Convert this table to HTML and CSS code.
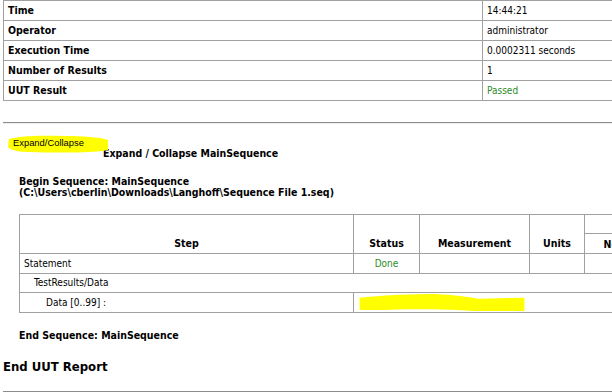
FILE: index.html
```html
<!DOCTYPE html>
<html lang="en">
<head>
    <meta charset="UTF-8">
    <title>UUT Report</title>
    <link rel="stylesheet" href="styles.css">
</head>
<body>
    <table class="summary">
        <tr><th>Time</th><td>14:44:21</td></tr>
        <tr><th>Operator</th><td>administrator</td></tr>
        <tr><th>Execution Time</th><td>0.0002311 seconds</td></tr>
        <tr><th>Number of Results</th><td>1</td></tr>
        <tr><th>UUT Result</th><td class="pass">Passed</td></tr>
    </table>

    <hr class="rule">

    <div class="toggle-row">
        <span class="toggle">
            <svg class="marker" viewBox="0 0 100 18" preserveAspectRatio="none">
                <path d="M1 4 C12 1 30 0 55 1 C75 1 92 2 100 5 L100 15 C85 18 50 18 22 17 C12 17 4 16 0 12 Z" fill="#ffff00"/>
            </svg>
            <span class="toggle-label">Expand/Collapse</span>
        </span>
        <span class="toggle-title">Expand / Collapse MainSequence</span>
    </div>

    <div class="sequence">
        <p class="seq-begin">Begin Sequence: MainSequence<br>(C:\Users\cberlin\Downloads\Langhoff\Sequence File 1.seq)</p>

        <table class="steps">
            <colgroup>
                <col class="c-step"><col class="c-status"><col class="c-meas"><col class="c-units"><col class="c-limit"><col class="c-limit">
            </colgroup>
            <tr class="head-top">
                <th rowspan="2">Step</th>
                <th rowspan="2">Status</th>
                <th rowspan="2">Measurement</th>
                <th rowspan="2">Units</th>
                <th colspan="2">Numeric Limits</th>
            </tr>
            <tr class="head-sub">
                <th>Nominal</th>
                <th>Comparison</th>
            </tr>
            <tr>
                <td>Statement</td>
                <td class="done">Done</td>
                <td></td>
                <td></td>
                <td></td>
                <td></td>
            </tr>
            <tr>
                <td colspan="6" class="lvl-1">TestResults/Data</td>
            </tr>
            <tr>
                <td class="lvl-2">Data [0..99] :</td>
                <td colspan="5" class="value">
                    <svg class="marker-wide" viewBox="0 0 174 19">
                        <path d="M0 4 C30 1 55 0 80 0 C100 1 115 3 125 5 L174 4 L174 18 L120 18 C100 16 70 16 50 16 C25 17 8 17 0 17 Z" fill="#ffff00"/>
                    </svg>
                </td>
            </tr>
        </table>

        <p class="seq-end">End Sequence: MainSequence</p>
    </div>

    <h3 class="report-end">End UUT Report</h3>

    <hr class="rule">
</body>
</html>
```

FILE: styles.css
```css
html {
    overflow: hidden;
}
body {
    margin: 0;
    font-family: 'DejaVu Sans Condensed', 'DejaVu Sans', sans-serif;
    font-size: 10px;
    color: #000;
    background: #fff;
    width: 900px;
}
table {
    border-collapse: collapse;
}
th, td {
    border: 1px solid #a0a0a0;
    height: 19px;
    padding: 0 4px;
    font-size: 10px;
    line-height: 12px;
}
th {
    font-size: 10.5px;
}
.summary {
    margin-left: 3px;
    width: 720px;
}
.summary th, .summary td {
    line-height: 19px;
    height: 19px;
}
.summary th {
    width: 470px;
    text-align: left;
    font-weight: bold;
}
.summary td {
    font-weight: normal;
}
.pass, .done {
    color: #2e8b1e;
}
.rule {
    margin: 21px 0 0 3px;
    border: none;
    border-top: 1px solid #8c8c8c;
    border-bottom: 1px solid #eeeeee;
    height: 0;
}
.toggle-row {
    display: flex;
    align-items: flex-end;
    margin-top: 11px;
    padding-left: 8px;
}
.toggle {
    position: relative;
    display: inline-block;
    width: 95px;
    height: 18px;
}
.marker {
    position: absolute;
    left: 0;
    top: 0;
    width: 100px;
    height: 18px;
}
.toggle-label {
    position: relative;
    display: block;
    padding: 2px 0 0 5px;
    font-family: 'Liberation Sans', Arial, sans-serif;
    font-size: 9.4px;
}
.toggle-title {
    font-weight: bold;
    font-size: 10.5px;
    margin-bottom: -6px;
}
.sequence {
    padding-left: 19px;
}
.seq-begin {
    margin: 23px 0 0;
    font-weight: bold;
    font-size: 10.5px;
    line-height: 11px;
}
.steps {
    margin-top: 16px;
    width: 760px;
}
.c-step { width: 334px; }
.c-status { width: 66px; }
.c-meas { width: 110px; }
.c-units { width: 55px; }
.head-top th {
    height: 18px;
}
.head-sub th {
    height: 19px;
}
.steps th[rowspan] {
    vertical-align: bottom;
    padding-bottom: 4px;
}
.done {
    text-align: center;
}
.lvl-1 {
    padding-left: 14px;
    height: 18px;
}
.lvl-2 {
    padding-left: 26px;
}
.value {
    padding: 0 0 0 1px;
    vertical-align: middle;
}
.marker-wide {
    display: block;
    width: 174px;
    height: 18px;
}
.seq-end {
    margin: 16px 0 0;
    font-weight: bold;
    font-size: 10.5px;
}
.report-end {
    margin: 18px 0 0 3px;
    font-size: 13px;
}
.report-end + .rule {
    margin-top: 17px;
}
```
